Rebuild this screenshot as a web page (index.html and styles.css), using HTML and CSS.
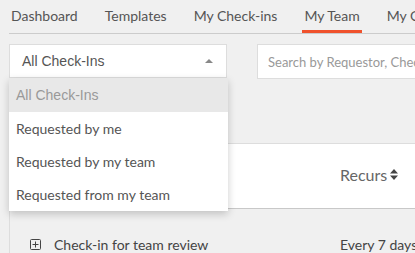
FILE: index.html
```html
<!DOCTYPE html>
<html lang="en">
<head>
    <meta charset="UTF-8">
    <meta name="viewport" content="width=device-width, initial-scale=1.0">
    <title>My Team Check-ins</title>
    <link rel="stylesheet" href="styles.css">
</head>
<body>
    <!-- Tabs -->
    <nav class="tabs">
        <a class="tab">Dashboard</a>
        <a class="tab">Templates</a>
        <a class="tab">My Check-ins</a>
        <a class="tab active">My Team</a>
        <a class="tab">My Check-in Requests</a>
    </nav>

    <!-- Filters -->
    <div class="filters">
        <div class="select-wrap">
            <div class="select">
                <span>All Check-Ins</span>
                <span class="caret"></span>
            </div>
            <ul class="dropdown">
                <li class="option selected">All Check-Ins</li>
                <li class="option">Requested by me</li>
                <li class="option">Requested by my team</li>
                <li class="option">Requested from my team</li>
            </ul>
        </div>
        <input type="text" class="search" placeholder="Search by Requestor, Check-in name">
    </div>

    <!-- Table -->
    <div class="table">
        <div class="table-head">
            <div class="col-name"></div>
            <div class="col-recurs">Recurs <span class="sort">
                <svg width="8" height="11" viewBox="0 0 8 11"><path d="M4 0 L8 4.5 L0 4.5 Z M4 11 L8 6.5 L0 6.5 Z" fill="#444"/></svg>
            </span></div>
        </div>
        <div class="table-row">
            <div class="col-name">
                <svg class="expand" width="11" height="11" viewBox="0 0 11 11"><rect x="0.5" y="0.5" width="10" height="10" rx="1" fill="none" stroke="#444"/><path d="M5.5 2.5 V8.5 M2.5 5.5 H8.5" stroke="#444"/></svg>
                Check-in for team review
            </div>
            <div class="col-recurs">Every 7 days</div>
        </div>
    </div>
</body>
</html>
```

FILE: styles.css
```css
body {
    margin: 0;
    background: #f0f0f0;
    font-family: 'Lato', sans-serif;
    color: #555;
    overflow: hidden;
}
.tabs {
    display: flex;
    gap: 23px;
    margin-left: 9px;
    height: 33px;
    border-bottom: 1px solid #ccc;
    white-space: nowrap;
}
.tab {
    padding: 7px 2px 0;
    font-size: 14px;
    color: #555;
    border-bottom: 3px solid transparent;
}
.tab.active {
    border-bottom-color: #f0522d;
}
.filters {
    display: flex;
    gap: 30px;
    margin: 10px 0 0 9px;
}
.select-wrap {
    position: relative;
}
.select {
    width: 218px;
    height: 34px;
    border: 1px solid #ddd;
    background: #fff;
    display: flex;
    align-items: center;
    justify-content: space-between;
    padding: 0 12px;
    box-sizing: border-box;
    font-family: 'Liberation Sans', Arial, sans-serif;
    font-size: 14px;
    color: #555;
}
.caret {
    width: 0;
    height: 0;
    border-left: 4px solid transparent;
    border-right: 4px solid transparent;
    border-bottom: 4px solid #888;
    margin-right: 1px;
}
.dropdown {
    position: absolute;
    top: 34px;
    left: 0;
    width: 219px;
    margin: 0;
    padding: 0;
    list-style: none;
    background: #fff;
    box-shadow: 0 3px 8px rgba(0, 0, 0, 0.2);
    z-index: 2;
}
.option {
    height: 33px;
    line-height: 33px;
    padding-left: 7px;
    font-size: 14px;
    color: #555;
}
.option.selected {
    background: #e8e8e8;
    color: #999;
    height: 34px;
    line-height: 34px;
    font-family: 'Liberation Sans', Arial, sans-serif;
}
.search {
    flex: 1;
    height: 35px;
    box-sizing: border-box;
    border: 1px solid #ddd;
    padding: 0 10px;
    font-family: 'Lato', sans-serif;
    font-size: 13px;
    background: #fff;
    outline: none;
}
.search::placeholder {
    color: #999;
}
.table {
    margin: 64px 0 0 9px;
    border-left: 1px solid #ddd;
}
.table-head {
    display: flex;
    align-items: center;
    height: 66px;
    padding-bottom: 3px;
    box-sizing: border-box;
    background: #fff;
    border-top: 1px solid #ddd;
    border-bottom: 1px solid #c8c8c8;
}
.table-row {
    display: flex;
    align-items: center;
    height: 66px;
    padding-top: 4px;
    box-sizing: border-box;
}
.col-name {
    width: 330px;
    padding-left: 20px;
    display: flex;
    align-items: center;
    gap: 13px;
    font-size: 14px;
    color: #444;
    flex-shrink: 0;
    box-sizing: border-box;
}
.col-recurs {
    font-size: 14px;
    color: #444;
    white-space: nowrap;
    display: flex;
    align-items: center;
    gap: 3px;
}
.table-head .col-recurs {
    font-size: 16px;
    color: #666;
}
.sort {
    display: flex;
}
```
